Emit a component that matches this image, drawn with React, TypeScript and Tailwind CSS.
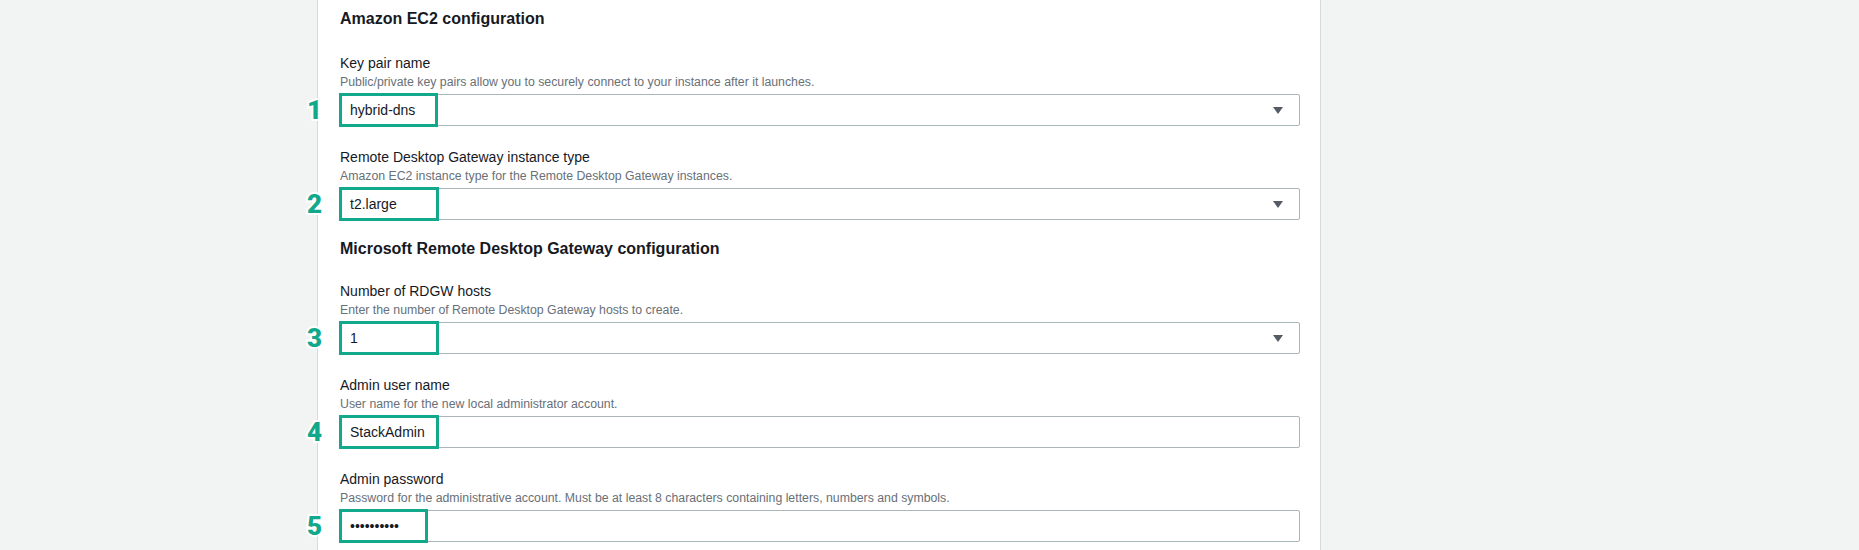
import React from 'react'

type Field = {
  label: string
  desc: string
  value: string
  kind: 'select' | 'input' | 'password'
  mark: string
  boxW: string
}

const ec2Fields: Field[] = [
  {
    label: 'Key pair name',
    desc: 'Public/private key pairs allow you to securely connect to your instance after it launches.',
    value: 'hybrid-dns',
    kind: 'select',
    mark: '1',
    boxW: 'w-[99px]',
  },
  {
    label: 'Remote Desktop Gateway instance type',
    desc: 'Amazon EC2 instance type for the Remote Desktop Gateway instances.',
    value: 't2.large',
    kind: 'select',
    mark: '2',
    boxW: 'w-[100px]',
  },
]

const rdgwFields: Field[] = [
  {
    label: 'Number of RDGW hosts',
    desc: 'Enter the number of Remote Desktop Gateway hosts to create.',
    value: '1',
    kind: 'select',
    mark: '3',
    boxW: 'w-[100px]',
  },
  {
    label: 'Admin user name',
    desc: 'User name for the new local administrator account.',
    value: 'StackAdmin',
    kind: 'input',
    mark: '4',
    boxW: 'w-[100px]',
  },
  {
    label: 'Admin password',
    desc: 'Password for the administrative account. Must be at least 8 characters containing letters, numbers and symbols.',
    value: '••••••••••',
    kind: 'password',
    mark: '5',
    boxW: 'w-[89px]',
  },
]

function FormField({ field }: { field: Field }) {
  return (
    <div className="flex flex-col">
      <span className="text-[14px] leading-[22px] text-[#16191f]">{field.label}</span>
      <span className="text-[12.3px] leading-[16px] text-[#687078]">{field.desc}</span>
      <div className="relative mt-[4px] flex h-[32px] items-center rounded-[2px] border border-[#aab7b8] bg-white pl-[9px] pr-[12px]">
        <span className="flex-1 text-[14px] text-[#16191f]">{field.value}</span>
        {field.kind === 'select' && (
          <svg width="10" height="7" viewBox="0 0 10 7" className="mr-[4px]">
            <path d="M0 0 L10 0 L5 7 Z" fill="#545b64" />
          </svg>
        )}

        {/* annotation overlay */}
        <div
          className={`absolute left-[-2px] top-[-2px] h-[34px] ${field.boxW} border-[3px] border-[#12a88c]`}
        ></div>
        <span
          className="absolute left-[-34px] top-[50%] translate-y-[-50%] text-[26px] font-black leading-none text-[#12a88c] [-webkit-text-stroke:4px_white] [paint-order:stroke_fill]"
          style={{ fontFamily: 'Roboto, "Liberation Sans", sans-serif' }}
        >
          {field.mark}
        </span>
      </div>
    </div>
  )
}

export default function App() {
  return (
    <div
      className="h-[550px] w-full overflow-hidden bg-[#f2f3f3] pl-[317px]"
      style={{ fontFamily: '"Liberation Sans", Arial, sans-serif' }}
    >
      <div className="h-full w-[1004px] border-x border-[#d5dbdb] bg-white pl-[22px] pr-[20px] pt-[7px]">
        {/* Amazon EC2 configuration */}
        <h2 className="text-[16px] font-bold leading-[24px] text-[#16191f]">Amazon EC2 configuration</h2>
        <div className="mt-[21px] flex flex-col gap-[20px]">
          {ec2Fields.map(f => (
            <FormField key={f.mark} field={f} />
          ))}
        </div>

        {/* Microsoft Remote Desktop Gateway configuration */}
        <h2 className="mt-[17px] text-[16px] font-bold leading-[24px] text-[#16191f]">
          Microsoft Remote Desktop Gateway configuration
        </h2>
        <div className="mt-[19px] flex flex-col gap-[20px]">
          {rdgwFields.map(f => (
            <FormField key={f.mark} field={f} />
          ))}
        </div>
      </div>
    </div>
  )
}
